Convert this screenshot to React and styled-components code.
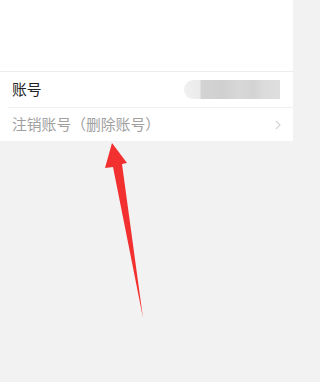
import React from 'react';
import styled, { createGlobalStyle } from 'styled-components';

const Global = createGlobalStyle`
  html, body { margin: 0; padding: 0; background: #f2f2f2; }
  body { font-family: "Noto Sans CJK SC", "Noto Sans", sans-serif; }
`;

const Page = styled.div`
  position: relative;
  width: 293px;
  height: 382px;
  overflow: hidden;
  background: #f2f2f2;
`;

const Header = styled.div`
  height: 72px;
  background: #fff;
  border-bottom: 1px solid #ececec;
  box-sizing: border-box;
`;

const List = styled.div`
  background: #fff;
`;

const Row = styled.div`
  display: flex;
  align-items: center;
  justify-content: space-between;
  box-sizing: border-box;
  height: 35px;
  padding: 0 14px 0 12px;
  font-size: 14.8px;
  line-height: 1;
  color: ${p => (p.$muted ? '#a0a0a0' : '#222')};
  & + & {
    height: 34px;
    border-top: 1px solid #f0f0f0;
    margin-left: 8px;
    padding-left: 4px;
  }
`;

const Blurred = styled.div`
  width: 96px;
  height: 19px;
  margin-right: -1px;
  border-radius: 10px 0 0 10px;
  background: linear-gradient(90deg, #f0f0f0 0, #ebebeb 16px, #d3d3d3 17px, #d0d0d0 40px, #d8d8d8 55px, #d3d3d3 70px, #dcdcdc 80px, #dedede 96px);
`;

const Chevron = styled.svg`
  width: 6px;
  height: 10px;
  margin-right: -2px;
`;

const Arrow = styled.svg`
  position: absolute;
  left: 0;
  top: 0;
  pointer-events: none;
`;

export default function App() {
  return (
    <Page>
      <Global />
      <Header />
      <List>
        <Row>
          <span>账号</span>
          <Blurred />
        </Row>
        <Row $muted>
          <span>注销账号（删除账号）</span>
          <Chevron viewBox="0 0 6 10">
            <path d="M1 1l4 4-4 4" fill="none" stroke="#d6d6d6" strokeWidth="1.2" />
          </Chevron>
        </Row>
      </List>
      <Arrow width="293" height="382" viewBox="0 0 293 382">
        <path d="M112 143 L127 163 L122 164 L143 318 L113 167 L105 168 Z" fill="#f2302f" />
      </Arrow>
    </Page>
  );
}
